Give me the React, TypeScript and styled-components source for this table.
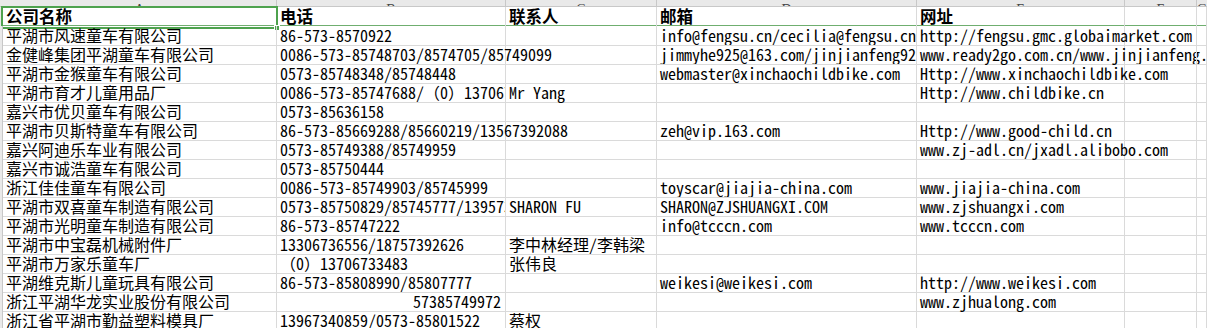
import React from 'react';
import styled, { createGlobalStyle } from 'styled-components';

type Row = [string, string, string, string, string];

const COLUMNS = '3px 274px 229px 151px 260px 208px 72px 1fr';
const LETTERS = ['', 'A', 'B', 'C', 'D', 'E', 'F', 'G'];

const HEADER: Row = ['公司名称', '电话', '联系人', '邮箱', '网址'];

const ROWS: Row[] = [
  ['平湖市风速童车有限公司', '86-573-8570922', '', 'info@fengsu.cn/cecilia@fengsu.cn', 'http://fengsu.gmc.globaimarket.com'],
  ['金健峰集团平湖童车有限公司', '0086-573-85748703/8574705/85749099', '', 'jimmyhe925@163.com/jinjianfeng925@163.com', 'www.ready2go.com.cn/www.jinjianfeng.com'],
  ['平湖市金猴童车有限公司', '0573-85748348/85748448', '', 'webmaster@xinchaochildbike.com', 'Http://www.xinchaochildbike.com'],
  ['平湖市育才儿童用品厂', '0086-573-85747688/（0）13706733483', 'Mr Yang', '', 'Http://www.childbike.cn'],
  ['嘉兴市优贝童车有限公司', '0573-85636158', '', '', ''],
  ['平湖市贝斯特童车有限公司', '86-573-85669288/85660219/13567392088', '', 'zeh@vip.163.com', 'Http://www.good-child.cn'],
  ['嘉兴阿迪乐车业有限公司', '0573-85749388/85749959', '', '', 'www.zj-adl.cn/jxadl.alibobo.com'],
  ['嘉兴市诚浩童车有限公司', '0573-85750444', '', '', ''],
  ['浙江佳佳童车有限公司', '0086-573-85749903/85745999', '', 'toyscar@jiajia-china.com', 'www.jiajia-china.com'],
  ['平湖市双喜童车制造有限公司', '0573-85750829/85745777/13957392688', 'SHARON FU', 'SHARON@ZJSHUANGXI.COM', 'www.zjshuangxi.com'],
  ['平湖市光明童车制造有限公司', '86-573-85747222', '', 'info@tcccn.com', 'www.tcccn.com'],
  ['平湖市中宝磊机械附件厂', '13306736556/18757392626', '李中林经理/李韩梁', '', ''],
  ['平湖市万家乐童车厂', '（0）13706733483', '张伟良', '', ''],
  ['平湖维克斯儿童玩具有限公司', '86-573-85808990/85807777', '', 'weikesi@weikesi.com', 'http://www.weikesi.com'],
  ['浙江平湖华龙实业股份有限公司', '57385749972', '', '', 'www.zjhualong.com'],
  ['浙江省平湖市勤益塑料模具厂', '13967340859/0573-85801522', '蔡权', '', ''],
];

const GlobalStyle = createGlobalStyle`
  html, body {
    margin: 0;
    padding: 0;
    background: #ffffff;
    overflow: hidden;
  }
  body {
    font-family: "Noto Sans Mono CJK SC", "Noto Sans CJK SC", monospace;
    color: #000000;
  }
`;

const Sheet = styled.div`
  width: 1207px;
  height: 328px;
  display: flex;
  flex-direction: column;
  overflow: hidden;
`;

const LetterBar = styled.div`
  display: grid;
  grid-template-columns: ${COLUMNS};
  height: 7px;
  flex: none;
  align-items: end;
  overflow: hidden;
  background: #e9e9e9;
  border-bottom: 1px solid #c8c8c8;
  box-sizing: border-box;
`;

const Letter = styled.div`
  height: 20px;
  line-height: 20px;
  margin-bottom: -6px;
  box-sizing: border-box;
  border-right: 1px solid #c8c8c8;
  text-align: center;
  font-family: "Liberation Serif", serif;
  font-size: 14px;
  color: #444444;
`;

const GridRow = styled.div<{ $head?: boolean }>`
  position: relative;
  display: grid;
  grid-template-columns: ${COLUMNS};
  height: 19px;
  flex: none;
  box-sizing: border-box;
  border-bottom: 1px solid ${(p) => (p.$head ? '#6fae6f' : 'transparent')};
`;

const Gutter = styled.div`
  background: #e9e9e9;
  border-right: 1px solid #c8c8c8;
`;

const Cell = styled.div<{ $clip: boolean; $right?: boolean; $head?: boolean }>`
  box-sizing: border-box;
  border-right: 1px solid #dadada;
  border-bottom: 1px solid ${(p) => (p.$head ? 'transparent' : '#dadada')};
  padding: 0 4px 0 3px;
  white-space: nowrap;
  overflow: ${(p) => (p.$clip ? 'hidden' : 'visible')};
  text-align: ${(p) => (p.$right ? 'right' : 'left')};
  font-size: ${(p) => (p.$head ? '16.5px' : '16px')};
  font-weight: ${(p) => (p.$head ? 700 : 400)};
  line-height: 19px;
`;

/* active-cell frame, sits on top of A1 */
const Selection = styled.div`
  position: absolute;
  grid-column: 2 / 3;
  grid-row: 1 / 2;
  left: -2px;
  top: -1px;
  right: -1px;
  bottom: -2px;
  border: 2px solid #4ea24e;
  pointer-events: none;
`;

const Handle = styled.div`
  position: absolute;
  right: -4px;
  bottom: -4px;
  width: 4px;
  height: 4px;
  background: #4ea24e;
  border: 1px solid #ffffff;
`;

const isNumber = (s: string) => /^\d+$/.test(s);

const SheetRow = ({ cells, head }: { cells: Row; head?: boolean }) => {
  const all = [...cells, '', ''];
  return (
    <GridRow $head={head}>
      <Gutter />
      {all.map((text, i) => (
        <Cell key={i} $head={head} $clip={!!all[i + 1]} $right={isNumber(text)}>
          {text}
        </Cell>
      ))}
      {head && (
        <Selection>
          <Handle />
        </Selection>
      )}
    </GridRow>
  );
};

export default function App() {
  return (
    <Sheet>
      <GlobalStyle />
      <LetterBar>
        {LETTERS.map((l, i) => (i === 0 ? <Gutter key={i} /> : <Letter key={i}>{l}</Letter>))}
      </LetterBar>
      <SheetRow cells={HEADER} head />
      {ROWS.map((r, i) => (
        <SheetRow key={i} cells={r} />
      ))}
    </Sheet>
  );
}
